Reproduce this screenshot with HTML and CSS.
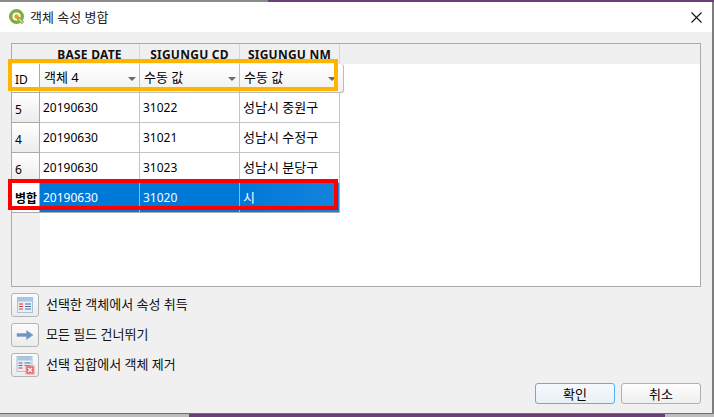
FILE: index.html
```html
<!DOCTYPE html>
<html lang="ko">
<head>
<meta charset="utf-8">
<title>객체 속성 병합</title>
<link rel="stylesheet" href="styles.css">
</head>
<body>
<div class="screen">
  <div class="strip strip-top"><span class="strip-gray strip-gray-top"></span><span class="strip-purple"></span></div>
  <div class="dialog">
    <header class="titlebar">
      <svg class="logo" width="18" height="18" viewBox="0 0 18 18">
        <circle cx="8.5" cy="8.5" r="5.8" fill="none" stroke="#7fae3e" stroke-width="3.4"/>
        <path d="M9 9 L15 15" stroke="#7fae3e" stroke-width="3.2"/>
        <circle cx="8.6" cy="8.6" r="2.3" fill="#ee9a3a"/>
        <path d="M11 11 L14.5 14.5" stroke="#e9e2b8" stroke-width="1.2"/>
      </svg>
      <span class="title">객체 속성 병합</span>
      <svg class="close" width="11" height="11" viewBox="0 0 11 11"><path d="M.5 .5 L10.5 10.5 M10.5 .5 L.5 10.5" stroke="#111" stroke-width="1.1" fill="none"/></svg>
    </header>
    <main class="content">
      <section class="table">
        <div class="grid">
          <div class="hcell corner"></div>
          <div class="hcell">BASE DATE</div>
          <div class="hcell">SIGUNGU CD</div>
          <div class="hcell">SIGUNGU NM</div>
          <div class="hcell blank"></div>

          <div class="rowhead comboid">ID</div>
          <div class="combo">객체 4<i class="arrow"></i></div>
          <div class="combo">수동 값<i class="arrow"></i></div>
          <div class="combo combo-last">수동 값<i class="arrow"></i></div>
          <div class="empty"></div>

          <div class="rowhead">5</div>
          <div class="cell">20190630</div>
          <div class="cell">31022</div>
          <div class="cell ko">성남시 중원구</div>
          <div class="empty"></div>

          <div class="rowhead">4</div>
          <div class="cell">20190630</div>
          <div class="cell">31021</div>
          <div class="cell ko">성남시 수정구</div>
          <div class="empty"></div>

          <div class="rowhead">6</div>
          <div class="cell">20190630</div>
          <div class="cell">31023</div>
          <div class="cell ko">성남시 분당구</div>
          <div class="empty"></div>

          <div class="rowhead merged">병합</div>
          <div class="cell sel">20190630</div>
          <div class="cell sel">31020</div>
          <div class="cell sel sel-last ko">시</div>
          <div class="empty"></div>

          <div class="filler"></div>
        </div>
        <div class="mark mark-orange"></div>
        <div class="mark mark-red"></div>
      </section>
      <section class="actions">
        <div class="action">
          <button class="toolbtn" type="button">
            <svg width="20" height="20" viewBox="0 0 20 20"><rect x="2.5" y="2.5" width="15" height="15" fill="#e6eff8" stroke="#a9c2dc"/><rect x="3" y="3" width="14" height="3.5" fill="#a9c6e4"/><path d="M4 9h4M4 11.5h4M4 14h4" stroke="#d33" stroke-width="1"/><path d="M10 9h6M10 11.5h6M10 14h6" stroke="#4a6f9c" stroke-width="1"/></svg>
          </button>
          <span>선택한 객체에서 속성 취득</span>
        </div>
        <div class="action">
          <button class="toolbtn" type="button">
            <svg width="20" height="20" viewBox="0 0 20 20"><path d="M2 8.5h9.5V5.5L18 10l-6.500 4.500v-3H2z" fill="#6c94bf" stroke="#86a6c8" stroke-width=".6"/></svg>
          </button>
          <span>모든 필드 건너뛰기</span>
        </div>
        <div class="action">
          <button class="toolbtn" type="button">
            <svg width="20" height="20" viewBox="0 0 20 20"><rect x="2" y="1.500" width="15" height="15" fill="#e6eff8" stroke="#a9c2dc"/><rect x="2.500" y="2" width="14" height="3.500" fill="#a9c6e4"/><path d="M3.500 8h4M3.500 10.500h4M3.500 13h4" stroke="#d33" stroke-width="1"/><path d="M9.500 8h6M9.500 10.500h6" stroke="#4a6f9c" stroke-width="1"/><rect x="11" y="11" width="8" height="8" fill="#e66" stroke="#e9a0a0"/><path d="M13 13l4 4M17 13l-4 4" stroke="#fff" stroke-width="1.300"/></svg>
          </button>
          <span>선택 집합에서 객체 제거</span>
        </div>
      </section>
      <footer class="footer">
        <button class="btn btn-primary" type="button">확인</button>
        <button class="btn" type="button">취소</button>
      </footer>
    </main>
  </div>
  <div class="strip strip-bottom"><span class="strip-gray strip-gray-left"></span><span class="strip-purple"></span><span class="strip-gray strip-gray-right"></span></div>
</div>
</body>
</html>
```

FILE: styles.css
```css
* { box-sizing: border-box; }
html, body { margin: 0; height: 100%; }
body {
  font-family: "Noto Sans", "Noto Sans CJK KR", sans-serif;
  font-size: 12px;
  color: #000;
  background: #c8c8c8;
  overflow: hidden;
}
.screen { display: flex; flex-direction: column; width: 714px; height: 417px; }
.strip { display: flex; flex: none; }
.strip-top { height: 2px; }
.strip-bottom { height: 3px; }
.strip-gray { background: #bdbdbd; flex: none; }
.strip-gray-top { width: 268px; background: #8a8a8a; }
.strip-gray-left { width: 189px; }
.strip-gray-right { width: 49px; }
.strip-purple { flex: 1; background: #6a3f74; }

.dialog {
  flex: 1;
  min-height: 0;
  display: flex;
  flex-direction: column;
  background: #f0f0f0;
  border-right: 2px solid #7d7d7d;
  border-bottom: 1px solid #6f6f6f;
}
.titlebar {
  flex: none;
  height: 30px;
  background: #fff;
  display: flex;
  align-items: center;
  padding: 0 10px 0 8px;
}
.logo { flex: none; margin-right: 4px; }
.title { font-size: 13px; color: #222; flex: 1; padding-bottom: 2px; }
.close { flex: none; }

.content { flex: 1; display: flex; flex-direction: column; padding: 11px 11px 10px 11px; min-height: 0; }

.table { position: relative; height: 244px; flex: none; width: 690px; }
.grid {
  display: grid;
  height: 100%;
  grid-template-columns: 28px 100px 100px 100px 1fr;
  grid-template-rows: 20px 29px 30px 30px 30px 30px 1fr;
  background: #fff;
  border: 1px solid #aaa;
}
.hcell {
  background: #f0f0f0;
  font-weight: 700;
  font-size: 12px;
  letter-spacing: .25px;
  display: flex;
  align-items: center;
  justify-content: center;
  padding-top: 1px;
  color: #111;
  border-right: 1px solid #d6d6d6;
}
.hcell.blank { border-right: 0; }
.hcell.corner { border-right: 0; }
.rowhead {
  background: linear-gradient(#fff, #ececec);
  border-right: 1px solid #aaa;
  border-bottom: 1px solid #aaa;
  display: flex;
  align-items: center;
  padding: 3px 0 0 3px;
  font-size: 12px;
}
.comboid { background: #fff; font-size: 12px; }
.merged { font-weight: 700; font-size: 12px; background: #fff; padding: 1px 0 0 3px; white-space: nowrap; }
.cell {
  border-right: 1px solid #c4c4c4;
  border-bottom: 1px solid #c4c4c4;
  display: flex;
  align-items: center;
  padding-left: 3px;
  background: #fff;
  font-size: 12px;
}
.ko { font-size: 13px; padding-bottom: 2px; }
.sel { background: #0078d7; color: #fff; border-right-color: #8cb9e0; border-bottom-color: #aaa; }
.sel-last { background: linear-gradient(90deg, #0078d7, #1484dd); }
.empty { background: #fff; }
.combo {
  position: relative;
  background: linear-gradient(#fff, #f0f0f0);
  border-right: 1px solid #c0c0c0;
  border-bottom: 1px solid #c0c0c0;
  display: flex;
  align-items: center;
  padding: 0 0 3px 4px;
  font-size: 13px;
}
.combo-last {
  width: 104px;
  border: 1px solid #bbb;
  border-left: 0;
  border-top: 0;
  border-radius: 0 3px 3px 0;
  z-index: 1;
}
.arrow {
  position: absolute;
  right: 3px;
  top: 13px;
  width: 0;
  height: 0;
  border-left: 4px solid transparent;
  border-right: 4px solid transparent;
  border-top: 4px solid #6a6a6a;
}
.combo-last .arrow { right: 7px; }
.filler {
  grid-column: 1;
  background: #f0f0f0;
}
.mark { position: absolute; left: -3px; width: 330px; border-style: solid; border-width: 4px; pointer-events: none; z-index: 2; }
.mark-orange { top: 16px; height: 32px; border-color: #ffb400; }
.mark-red { top: 136px; height: 31px; border-color: #ff0000; }

.actions { display: flex; flex-direction: column; gap: 6px; margin-top: 6px; flex: none; }
.action { display: flex; align-items: center; gap: 7px; height: 24px; font-size: 13px; color: #111; }
.action span { padding-bottom: 3px; }
.toolbtn {
  width: 28px;
  height: 24px;
  padding: 0;
  display: flex;
  align-items: center;
  justify-content: center;
  background: linear-gradient(#fbfbfb, #ececec);
  border: 1px solid #b5b5b5;
  border-radius: 3px;
}
.footer { display: flex; justify-content: flex-end; gap: 6px; margin-top: 6px; padding-right: 0; flex: none; }
.btn {
  width: 80px;
  height: 21px;
  padding: 0 0 2px;
  font-family: inherit;
  font-size: 13px;
  color: #000;
  background: linear-gradient(#fdfdfd, #efefef);
  border: 1px solid #b0b0b0;
  border-radius: 3px;
}
.btn-primary { background: linear-gradient(#f6fafd, #e8eff5); border-color: #4db2ff; }
```
